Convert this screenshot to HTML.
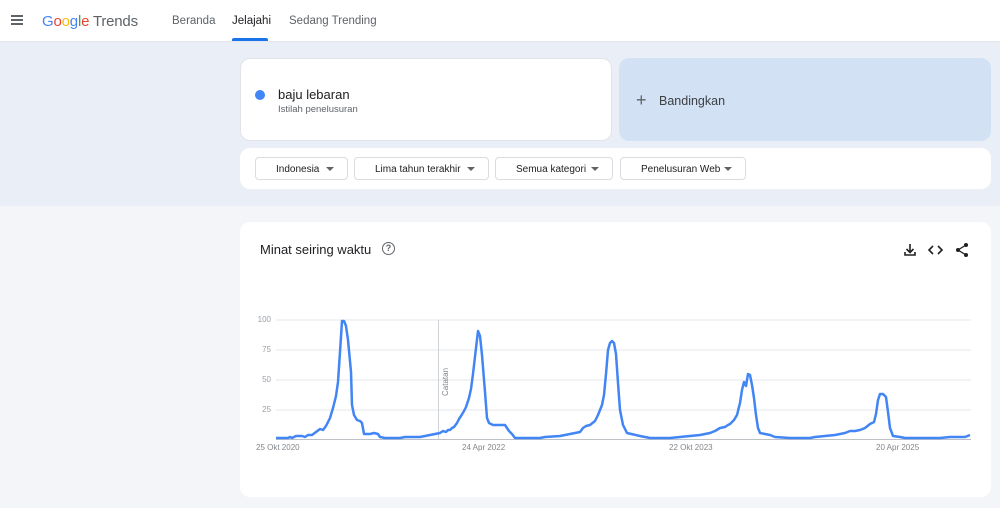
<!DOCTYPE html>
<html><head><meta charset="utf-8"><style>
body{margin:0;width:1000px;height:508px;background:#fff;font-family:"Liberation Sans",Arial,sans-serif;position:relative;overflow:hidden}
.top{position:absolute;left:0;top:0;width:1000px;height:41px;background:#fff;border-bottom:1px solid #e3e6ec}
.band{position:absolute;left:0;top:42px;width:1000px;height:164px;background:#eaeef7}
.low{position:absolute;left:0;top:206px;width:1000px;height:302px;background:#f3f5f9}
.nav{position:absolute;top:15px;font-size:11.5px;color:#5f6368}
.card{position:absolute;background:#fff;border-radius:10px}
.chip{position:absolute;top:157px;height:23px;border:1px solid #dadce0;border-radius:4px;font-size:10px;color:#202124;line-height:23px;box-sizing:border-box;padding-left:20px}
.chip:after{content:"";position:absolute;right:13px;top:9px;border-left:4px solid transparent;border-right:4px solid transparent;border-top:4px solid #5f6368}
.yl{position:absolute;left:256px;font-size:8px;color:#9aa0a6;width:15px;text-align:right}
.xl{position:absolute;top:443px;font-size:8px;color:#80868b}
</style></head><body>
<div class="top">
 <div style="position:absolute;left:11px;top:15px;width:12px">
  <div style="height:1.5px;background:#5f6368;margin-bottom:2.5px"></div><div style="height:1.5px;background:#5f6368;margin-bottom:2.5px"></div><div style="height:1.5px;background:#5f6368"></div></div>
 <div style="position:absolute;left:42px;top:13px;font-size:15px;letter-spacing:-0.2px"><span style="color:#4285f4">G</span><span style="color:#ea4335">o</span><span style="color:#fbbc05">o</span><span style="color:#4285f4">g</span><span style="color:#34a853">l</span><span style="color:#ea4335">e</span> <span style="color:#5f6368">Trends</span></div>
 <div class="nav" style="left:172px">Beranda</div>
 <div class="nav" style="left:232px;color:#202124">Jelajahi</div>
 <div style="position:absolute;left:232px;top:38px;width:36px;height:3px;background:#1a73e8;border-radius:2px 2px 0 0"></div>
 <div class="nav" style="left:289px">Sedang Trending</div>
</div>
<div class="band"></div><div class="low"></div>
<div class="card" style="left:240px;top:58px;width:372px;height:83px;border:1px solid #e0e3e8;box-sizing:border-box">
 <div style="position:absolute;left:14px;top:31px;width:10px;height:10px;border-radius:50%;background:#4285f4"></div>
 <div style="position:absolute;left:37px;top:28px;font-size:13px;color:#202124">baju lebaran</div>
 <div style="position:absolute;left:37px;top:45px;font-size:9.5px;color:#5f6368">Istilah penelusuran</div>
</div>
<div style="position:absolute;left:619px;top:58px;width:372px;height:83px;background:#d3e1f5;border-radius:10px">
 <div style="position:absolute;left:17px;top:35px;font-size:18px;color:#5f6368;line-height:14px">+</div>
 <div style="position:absolute;left:40px;top:36px;font-size:12.5px;color:#3c4043">Bandingkan</div>
</div>
<div class="card" style="left:240px;top:148px;width:751px;height:41px"></div>
<div class="chip" style="left:255px;width:93px">Indonesia</div>
<div class="chip" style="left:354px;width:135px">Lima tahun terakhir</div>
<div class="chip" style="left:495px;width:118px">Semua kategori</div>
<div class="chip" style="left:620px;width:126px">Penelusuran Web</div>
<div class="card" style="left:240px;top:222px;width:751px;height:275px"></div>
<div style="position:absolute;left:260px;top:242px;font-size:13px;color:#202124">Minat seiring waktu</div>
<div style="position:absolute;left:382px;top:242px;width:11px;height:11px;border:1.3px solid #5f6368;border-radius:50%;font-size:9px;text-align:center;line-height:11px;color:#5f6368;font-weight:bold">?</div>
<svg style="position:absolute;left:900px;top:240px" width="75" height="20" viewBox="0 0 75 20">
 <path d="M10 4v8M6.5 9l3.5 3.5 3.5-3.5M5 12v3h10v-3" stroke="#202124" stroke-width="1.6" fill="none"/>
 <path d="M33 6l-4 4 4 4M38 6l4 4-4 4" stroke="#202124" stroke-width="1.6" fill="none"/>
 <circle cx="66" cy="5" r="2" fill="#202124"/><circle cx="58" cy="10" r="2" fill="#202124"/><circle cx="66" cy="15" r="2" fill="#202124"/>
 <path d="M66 5L58 10L66 15" stroke="#202124" stroke-width="1.3" fill="none"/>
</svg>
<svg style="position:absolute;left:0;top:0" width="1000" height="508">
 <g stroke="#e5e7ea" stroke-width="1">
  <line x1="276" y1="320" x2="971" y2="320"/><line x1="276" y1="350" x2="971" y2="350"/>
  <line x1="276" y1="380" x2="971" y2="380"/><line x1="276" y1="410" x2="971" y2="410"/>
 </g>
 <line x1="276" y1="439.5" x2="971" y2="439.5" stroke="#bdc1c6"/>
 <line x1="438.5" y1="320" x2="438.5" y2="439" stroke="#cfd2d6"/>
 <text x="448" y="396" transform="rotate(-90 448 396)" font-size="8" fill="#80868b" font-family="Liberation Sans">Catatan</text>
 <polyline fill="none" stroke="#4285f4" stroke-width="2.5" stroke-linejoin="round" points="276,438 288,438 290,437 292,438 296,436 302,436 305,437 308,435 312,435 316,432 320,429 323,430 326,426 330,418 333,408 336,396 338,382 340,352 342,321 344,321 346,326 348,340 351,372 352,405 354,415 357,420 360,421 362,423 364,434 370,434 374,433 378,434 380,437 385,438 400,438 405,437 420,437 425,436 430,435 435,434 440,433 443,431 446,432 448,430 450,430 452,428 454,427 457,423 459,419 461,416 464,411 466,407 469,398 471,389 473,374 476,348 478,331 480,336 482,355 485,392 487,418 489,423 493,425 505,425 509,431 512,434 515,438 540,438 545,437 560,436 570,434 580,432 583,428 586,426 590,425 595,421 598,415 602,405 604,395 606,374 608,350 610,343 612,341 614,343 616,354 618,383 620,410 623,425 627,433 640,436 650,438 670,438 680,437 690,436 700,435 710,433 715,431 720,428 725,427 728,425 730,424 734,420 737,415 740,403 742,390 744,382 746,386 748,374 750,375 752,385 754,398 756,415 758,428 760,433 765,434 770,435 775,437 790,438 810,438 815,437 825,436 835,435 845,433 850,431 855,431 860,430 865,428 870,424 874,422 876,414 878,400 880,394 883,394 886,397 888,412 890,428 893,436 900,437 905,438 940,438 950,437 960,437 965,437 970,435"/>
</svg>
<div class="yl" style="top:315px">100</div>
<div class="yl" style="top:345px">75</div>
<div class="yl" style="top:375px">50</div>
<div class="yl" style="top:405px">25</div>
<div class="xl" style="left:256px">25 Okt 2020</div>
<div class="xl" style="left:462px">24 Apr 2022</div>
<div class="xl" style="left:669px">22 Okt 2023</div>
<div class="xl" style="left:876px">20 Apr 2025</div>
</body></html>
